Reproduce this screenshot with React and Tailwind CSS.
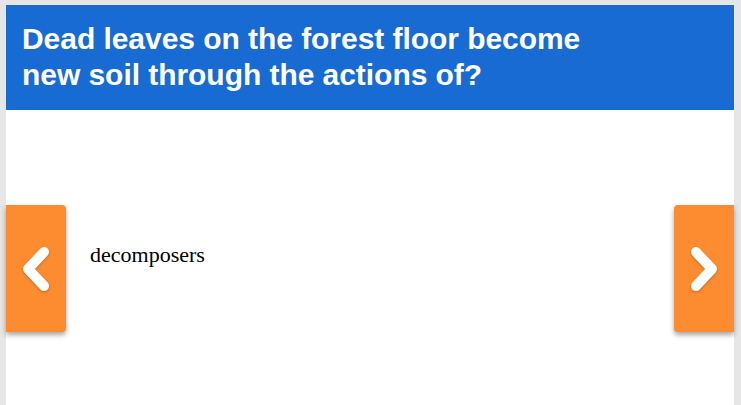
import { useState } from 'react';

const Chevron = ({ dir }) => (
    <svg width="36" height="46" viewBox="0 0 36 46" className="drop-shadow-[0_1px_1px_rgba(0,0,0,0.25)]">
        <path
            d={dir === 'left' ? 'M26 6 L10 23 L26 40' : 'M10 6 L26 23 L10 40'}
            fill="none"
            stroke="white"
            strokeWidth="10"
            strokeLinecap="round"
            strokeLinejoin="round"
        />
    </svg>
);

const NavButton = ({ dir, onClick }) => (
    <button
        onClick={onClick}
        className={`w-[60px] h-[127px] bg-[#fd8b2f] flex items-center justify-center shadow-[0_3px_5px_rgba(0,0,0,0.35)] ${dir === 'left' ? 'rounded-r-[4px]' : 'rounded-l-[4px]'}`}
    >
        <Chevron dir={dir} />
    </button>
);

export default function App() {
    const answers = ['decomposers'];
    const [index, setIndex] = useState(0);

    return (
        <div className="w-[741px] h-[405px] bg-[#e6e6e6] pl-[6px] pr-[7px] pt-[5px] overflow-hidden">
            <section className="h-full bg-white flex flex-col">
                <header className="h-[105px] bg-[#176bd3] px-[16px] pt-[16px]">
                    <h1 className="text-white font-bold text-[30px] leading-[36px] tracking-[-0.05px] font-['Liberation_Sans',Arial,sans-serif]">
                        Dead leaves on the forest floor become
                        <br />
                        new soil through the actions of?
                    </h1>
                </header>
                <div className="flex items-center justify-between mt-[95px]">
                    <NavButton dir="left" onClick={() => setIndex((index + answers.length - 1) % answers.length)} />
                    <p className="flex-1 pl-[24px] pb-[28px] text-[22px] text-black font-['Liberation_Serif','Times_New_Roman',serif]">
                        {answers[index]}
                    </p>
                    <NavButton dir="right" onClick={() => setIndex((index + 1) % answers.length)} />
                </div>
            </section>
        </div>
    );
}
